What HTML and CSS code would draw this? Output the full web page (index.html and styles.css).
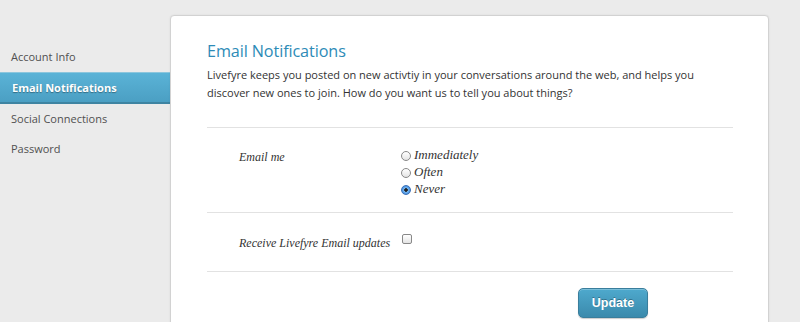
FILE: index.html
```html
<!DOCTYPE html>
<html>
<head>
<meta charset="utf-8">
<link rel="stylesheet" href="styles.css">
</head>
<body>
<div class="page">
  <nav class="sidebar">
    <a class="nav-item">Account Info</a>
    <a class="nav-item active">Email Notifications</a>
    <a class="nav-item">Social Connections</a>
    <a class="nav-item">Password</a>
  </nav>
  <main class="card">
    <h1 class="title">Email Notifications</h1>
    <p class="intro">Livefyre keeps you posted on new activtiy in your conversations around the web, and helps you discover new ones to join. How do you want us to tell you about things?</p>
    <div class="row row-radio">
      <div class="label">Email me</div>
      <div class="controls">
        <label class="opt"><span class="radio"></span>Immediately</label>
        <label class="opt"><span class="radio"></span>Often</label>
        <label class="opt"><span class="radio checked"></span>Never</label>
      </div>
    </div>
    <div class="row row-check">
      <div class="label">Receive Livefyre Email updates</div>
      <div class="controls"><span class="checkbox"></span></div>
    </div>
    <div class="actions">
      <button class="btn">Update</button>
    </div>
  </main>
</div>
</body>
</html>
```
FILE: styles.css
```css
html, body {
  margin: 0;
  padding: 0;
  background: #ebebeb;
  height: 322px;
  overflow: hidden;
}
.page {
  display: flex;
  align-items: flex-start;
}
.sidebar {
  width: 170px;
  flex: none;
  padding-top: 42px;
  display: flex;
  flex-direction: column;
  font-family: "Open Sans", sans-serif;
  font-size: 11px;
}
.nav-item {
  display: block;
  height: 30px;
  line-height: 30px;
  padding-left: 11px;
  color: #505050;
}
.nav-item.active {
  height: 29px;
  line-height: 29px;
  color: #fff;
  font-weight: bold;
  padding-left: 12px;
  background: linear-gradient(#5ab3d7, #4b9fc3);
  border-top: 1px solid #8cc6dd;
  border-bottom: 2px solid #3e84a2;
  text-shadow: 0 1px 1px rgba(0,0,0,0.35);
}
.card {
  margin-top: 15px;
  width: 526px;
  height: 320px;
  background: #fff;
  border: 1px solid #d2d2d2;
  border-radius: 4px 4px 0 0;
  box-shadow: 0 0 2px rgba(0,0,0,0.08);
  padding: 0 35px 0 36px;
  font-family: "Open Sans", sans-serif;
}
.title {
  margin: 24px 0 0;
  font-size: 16.2px;
  font-weight: normal;
  color: #2d8bb7;
  line-height: 22px;
  letter-spacing: -0.1px;
}
.intro {
  margin: 4px 0 0;
  font-size: 11px;
  line-height: 18px;
  color: #333;
  padding-bottom: 25px;
  border-bottom: 1px solid #e2e2e2;
}
.row {
  display: grid;
  grid-template-columns: 162px 1fr;
  padding-left: 32px;
  border-bottom: 1px solid #e2e2e2;
  font-family: "Liberation Serif", serif;
  font-style: italic;
  color: #333;
}
.row-radio {
  padding-top: 18px;
  height: 66px;
}
.row-radio .label {
  font-size: 12px;
  padding-top: 4px;
}
.controls {
  display: flex;
  flex-direction: column;
}
.opt {
  display: flex;
  align-items: center;
  height: 17px;
  font-size: 13px;
  color: #333;
}
.radio {
  width: 10px;
  height: 10px;
  box-sizing: border-box;
  border: 1px solid #888;
  border-radius: 50%;
  margin-right: 3px;
  margin-top: 3px;
  background: linear-gradient(#fff, #e4e4e4);
}
.radio.checked {
  border-color: #3a70b8;
  background: radial-gradient(circle, #222 0 1.5px, #7ab8f0 2px, #2f7fd8 5px);
}
.row-check {
  height: 58px;
  align-items: center;
}
.row-check .label {
  font-size: 12px;
  padding-top: 2px;
}
.checkbox {
  display: block;
  width: 10px;
  height: 10px;
  box-sizing: border-box;
  border: 1px solid #888;
  border-radius: 2px;
  background: linear-gradient(#fff, #e4e4e4);
  margin-left: 1px;
  margin-top: -6px;
}
.actions {
  display: flex;
  padding-left: 371px;
  padding-top: 16px;
}
.btn {
  width: 70px;
  height: 30px;
  border: 1px solid #3a7e9c;
  border-radius: 5px;
  background: linear-gradient(#4ea9cd, #3b8aac);
  color: #fff;
  font-family: "Liberation Sans", Arial, sans-serif;
  font-weight: bold;
  font-size: 12.5px;
  text-shadow: 0 -1px 0 rgba(0,0,0,0.3);
  box-shadow: 0 1px 1px rgba(0,0,0,0.2), inset 0 1px 0 rgba(255,255,255,0.25);
  padding: 0;
}
```
